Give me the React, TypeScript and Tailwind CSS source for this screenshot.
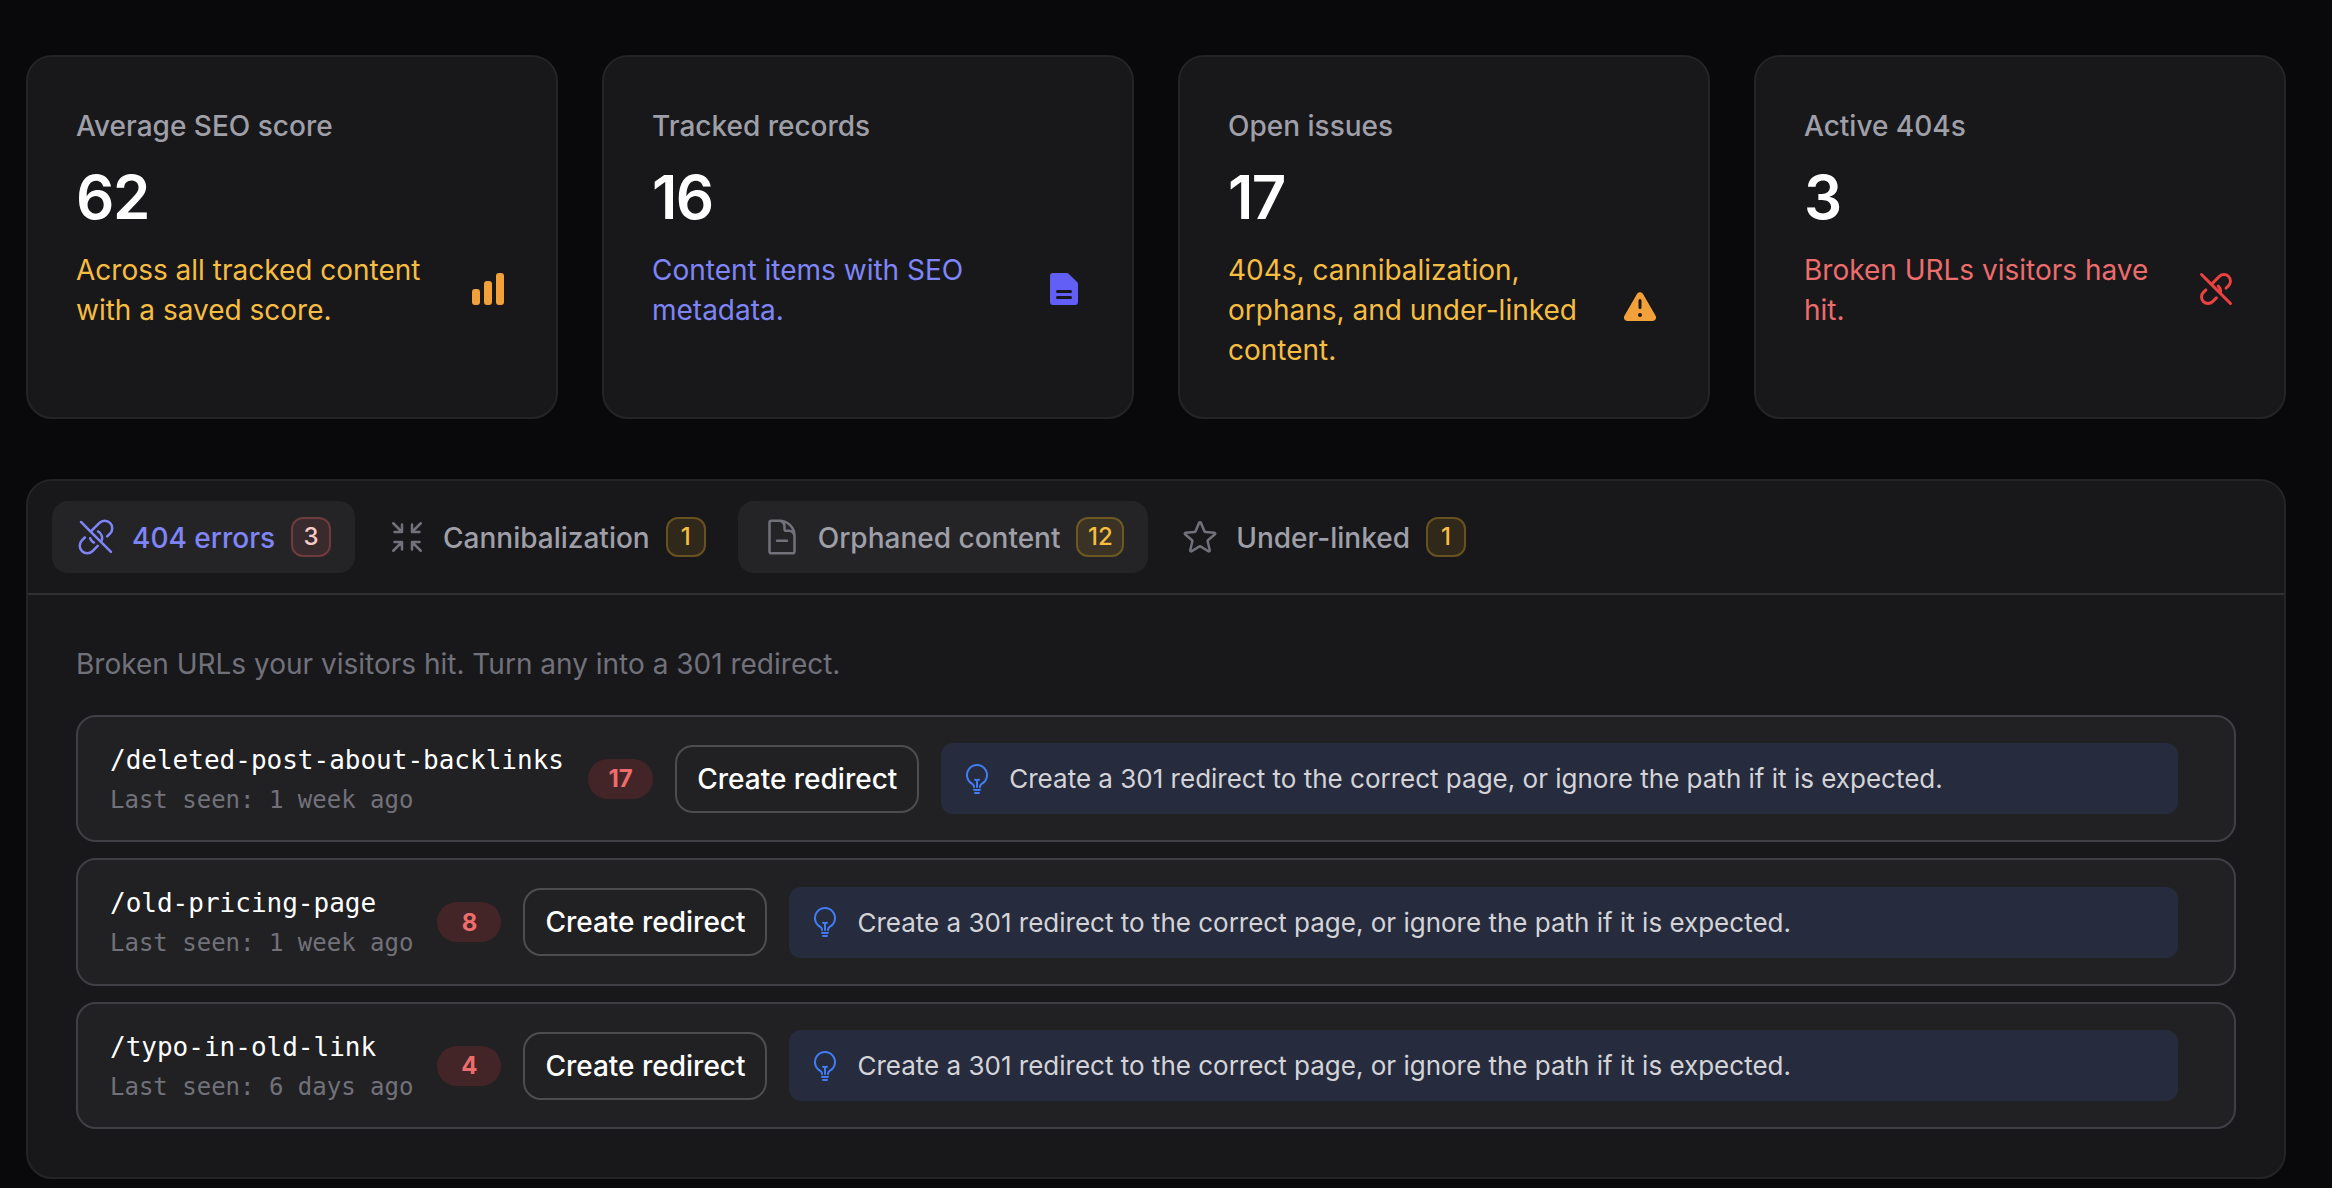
import type { ReactNode } from "react";
import {
  HiMiniChartBar,
  HiMiniDocumentText,
  HiMiniExclamationTriangle,
  HiOutlineArrowsPointingIn,
  HiOutlineDocumentMinus,
  HiOutlineLightBulb,
  HiOutlineStar,
} from "react-icons/hi2";

const HINT = "Create a 301 redirect to the correct page, or ignore the path if it is expected.";

function LinkSlashMini({ className }: { className?: string }) {
  return (
    <svg viewBox="0 0 20 20" fill="currentColor" className={className} aria-hidden>
      <path d="M2.22 2.22a.75.75 0 0 1 1.06 0l4.46 4.46c.128-.178.272-.349.432-.508l3-3a4 4 0 0 1 5.657 5.656l-1.225 1.225a.75.75 0 1 1-1.06-1.06l1.224-1.225a2.5 2.5 0 0 0-3.536-3.536l-3 3a2.504 2.504 0 0 0-.406.533l2.59 2.59a2.49 2.49 0 0 0-.79-1.254.75.75 0 1 1 .977-1.138 3.997 3.997 0 0 1 1.306 3.886l4.871 4.87a.75.75 0 1 1-1.06 1.061l-5.177-5.177-.006-.005-4.134-4.134a.65.65 0 0 1-.005-.006L2.22 3.28a.75.75 0 0 1 0-1.06Zm3.237 7.727a.75.75 0 0 1 0 1.06l-1.225 1.225a2.5 2.5 0 0 0 3.536 3.536l1.879-1.879a.75.75 0 1 1 1.06 1.06L8.83 16.83a4 4 0 0 1-5.657-5.657l1.224-1.225a.75.75 0 0 1 1.06 0Z" />
    </svg>
  );
}

function LinkSlashOutline({ className }: { className?: string }) {
  return (
    <svg
      viewBox="0 0 24 24"
      fill="none"
      stroke="currentColor"
      strokeWidth="1.5"
      strokeLinecap="round"
      strokeLinejoin="round"
      className={className}
      aria-hidden
    >
      <path d="M13.181 8.68a4.503 4.503 0 0 1 1.903 6.405m-9.768-2.782L3.56 14.06a4.5 4.5 0 0 0 6.364 6.365l3.129-3.129m5.614-5.615 1.757-1.757a4.5 4.5 0 0 0-6.364-6.365l-4.5 4.5c-.258.26-.479.541-.661.84m1.903 6.405a4.495 4.495 0 0 1-1.242-.88 4.483 4.483 0 0 1-1.062-1.683m6.587 2.345 5.907 5.907m-5.907-5.907L8.898 8.898M2.991 2.99 8.898 8.9" />
    </svg>
  );
}

const stats = [
  {
    label: "Average SEO score",
    value: "62",
    description: "Across all tracked content with a saved score.",
    color: "text-[#f6bd41]",
    icon: <HiMiniChartBar className="size-10 shrink-0 text-[#f2a03a]" />,
  },
  {
    label: "Tracked records",
    value: "16",
    description: "Content items with SEO metadata.",
    color: "text-[#7f85f7]",
    icon: <HiMiniDocumentText className="size-10 shrink-0 text-[#625ff6]" />,
  },
  {
    label: "Open issues",
    value: "17",
    description: "404s, cannibalization, orphans, and under-linked content.",
    color: "text-[#f6bd41]",
    icon: <HiMiniExclamationTriangle className="size-10 shrink-0 text-[#f2a03a]" />,
  },
  {
    label: "Active 404s",
    value: "3",
    description: "Broken URLs visitors have hit.",
    color: "text-[#ed6c6c]",
    icon: <LinkSlashMini className="size-10 shrink-0 text-[#eb4141]" />,
  },
];

const rows = [
  { path: "/deleted-post-about-backlinks", seen: "1 week ago", hits: 17 },
  { path: "/old-pricing-page", seen: "1 week ago", hits: 8 },
  { path: "/typo-in-old-link", seen: "6 days ago", hits: 4 },
];

type TabProps = {
  icon: ReactNode;
  label: string;
  count: number;
  active?: boolean;
  hovered?: boolean;
};

function Tab({ icon, label, count, active, hovered }: TabProps) {
  return (
    <button
      type="button"
      className={`flex h-[72px] items-center gap-4 rounded-2xl px-6 text-[28px] font-medium leading-10 ${
        active ? "text-[#7f85f7]" : "text-[#9f9fa8]"
      } ${active || hovered ? "bg-[#242427]" : ""}`}
    >
      {icon}
      <span className="-mb-px pt-px">{label}</span>
      <span
        className={`flex h-10 min-w-10 items-center justify-center rounded-xl border-2 px-[9.5px] text-[24px] leading-8 ${
          active
            ? "border-[#6f3b3d] bg-[#392a2d] text-[#f6cbcb]"
            : hovered
              ? "border-[#6d5822] bg-[#3a3325] text-[#f6bd41]"
              : "border-[#67511f] bg-[#2f281b] text-[#f6bd41]"
        }`}
      >
        {count}
      </span>
    </button>
  );
}

export default function App() {
  return (
    <div className="h-[1188px] overflow-hidden bg-[#09090b] pl-[26px] pr-[46px] pt-[55px] font-['Inter',sans-serif]">
      <div className="grid grid-cols-4 gap-11">
        {stats.map((stat) => (
          <section
            key={stat.label}
            className="flex h-[364px] flex-col gap-4 rounded-[26px] border-2 border-[#242426] bg-[#18181b] p-12"
          >
            <h3 className="-mb-px pt-px text-[28px] font-medium leading-10 text-[#9f9fa8]">
              {stat.label}
            </h3>
            <p className="text-[60px] font-semibold leading-[72px] tracking-tight text-white">
              {stat.value}
            </p>
            <div className={`flex items-center gap-2 ${stat.color}`}>
              <p className="-mb-px flex-1 pt-px text-[28px] leading-10">{stat.description}</p>
              {stat.icon}
            </div>
          </section>
        ))}
      </div>

      <section className="mt-[60px] h-[700px] rounded-[26px] border-2 border-[#242426] bg-[#18181b]">
        <nav className="flex gap-2 border-b-2 border-[#2f2f31] px-6 py-5">
          <Tab
            icon={<LinkSlashOutline className="size-10 text-[#7f85f7]" />}
            label="404 errors"
            count={3}
            active
          />
          <Tab
            icon={<HiOutlineArrowsPointingIn className="size-10 text-[#71717a]" />}
            label="Cannibalization"
            count={1}
          />
          <Tab
            icon={<HiOutlineDocumentMinus className="size-10 text-[#71717a]" />}
            label="Orphaned content"
            count={12}
            hovered
          />
          <Tab
            icon={<HiOutlineStar className="size-10 text-[#71717a]" />}
            label="Under-linked"
            count={1}
          />
        </nav>

        <div className="p-12">
          <p className="-mb-px pt-px text-[28px] leading-10 text-[#71717a]">
            Broken URLs your visitors hit. Turn any into a 301 redirect.
          </p>

          <div className="mt-8 flex flex-col gap-4">
            {rows.map((row) => (
              <div
                key={row.path}
                className="flex h-[127.45px] items-center gap-6 rounded-[20px] border-2 border-[#3f3f46] bg-[#212123] px-8"
              >
                <div className="pt-px font-['DejaVu_Sans_Mono',monospace]">
                  <p className="text-[26px] leading-[39px] text-white">{row.path}</p>
                  <p className="mt-0.5 text-[24px] leading-9 text-[#71717a]">
                    Last seen: {row.seen}
                  </p>
                </div>
                <span className="flex h-10 min-w-16 items-center justify-center rounded-full bg-[#432427] px-[20.5px] pt-px text-[24px] font-bold text-[#ed6c6c]">
                  {row.hits}
                </span>
                <button
                  type="button"
                  className="-mx-0.5 h-[68px] w-[244px] rounded-[18px] border-2 border-[#4d4d4f] text-[28px] font-medium text-white"
                >
                  Create redirect
                </button>
                <div className="mr-6 flex h-[71px] flex-1 items-center gap-4 rounded-xl bg-[#262c3e] px-5">
                  <HiOutlineLightBulb className="size-8 text-[#427cf3]" />
                  <span className="text-[26px] leading-[39px] text-[#d4d4d8]">{HINT}</span>
                </div>
              </div>
            ))}
          </div>
        </div>
      </section>
    </div>
  );
}
